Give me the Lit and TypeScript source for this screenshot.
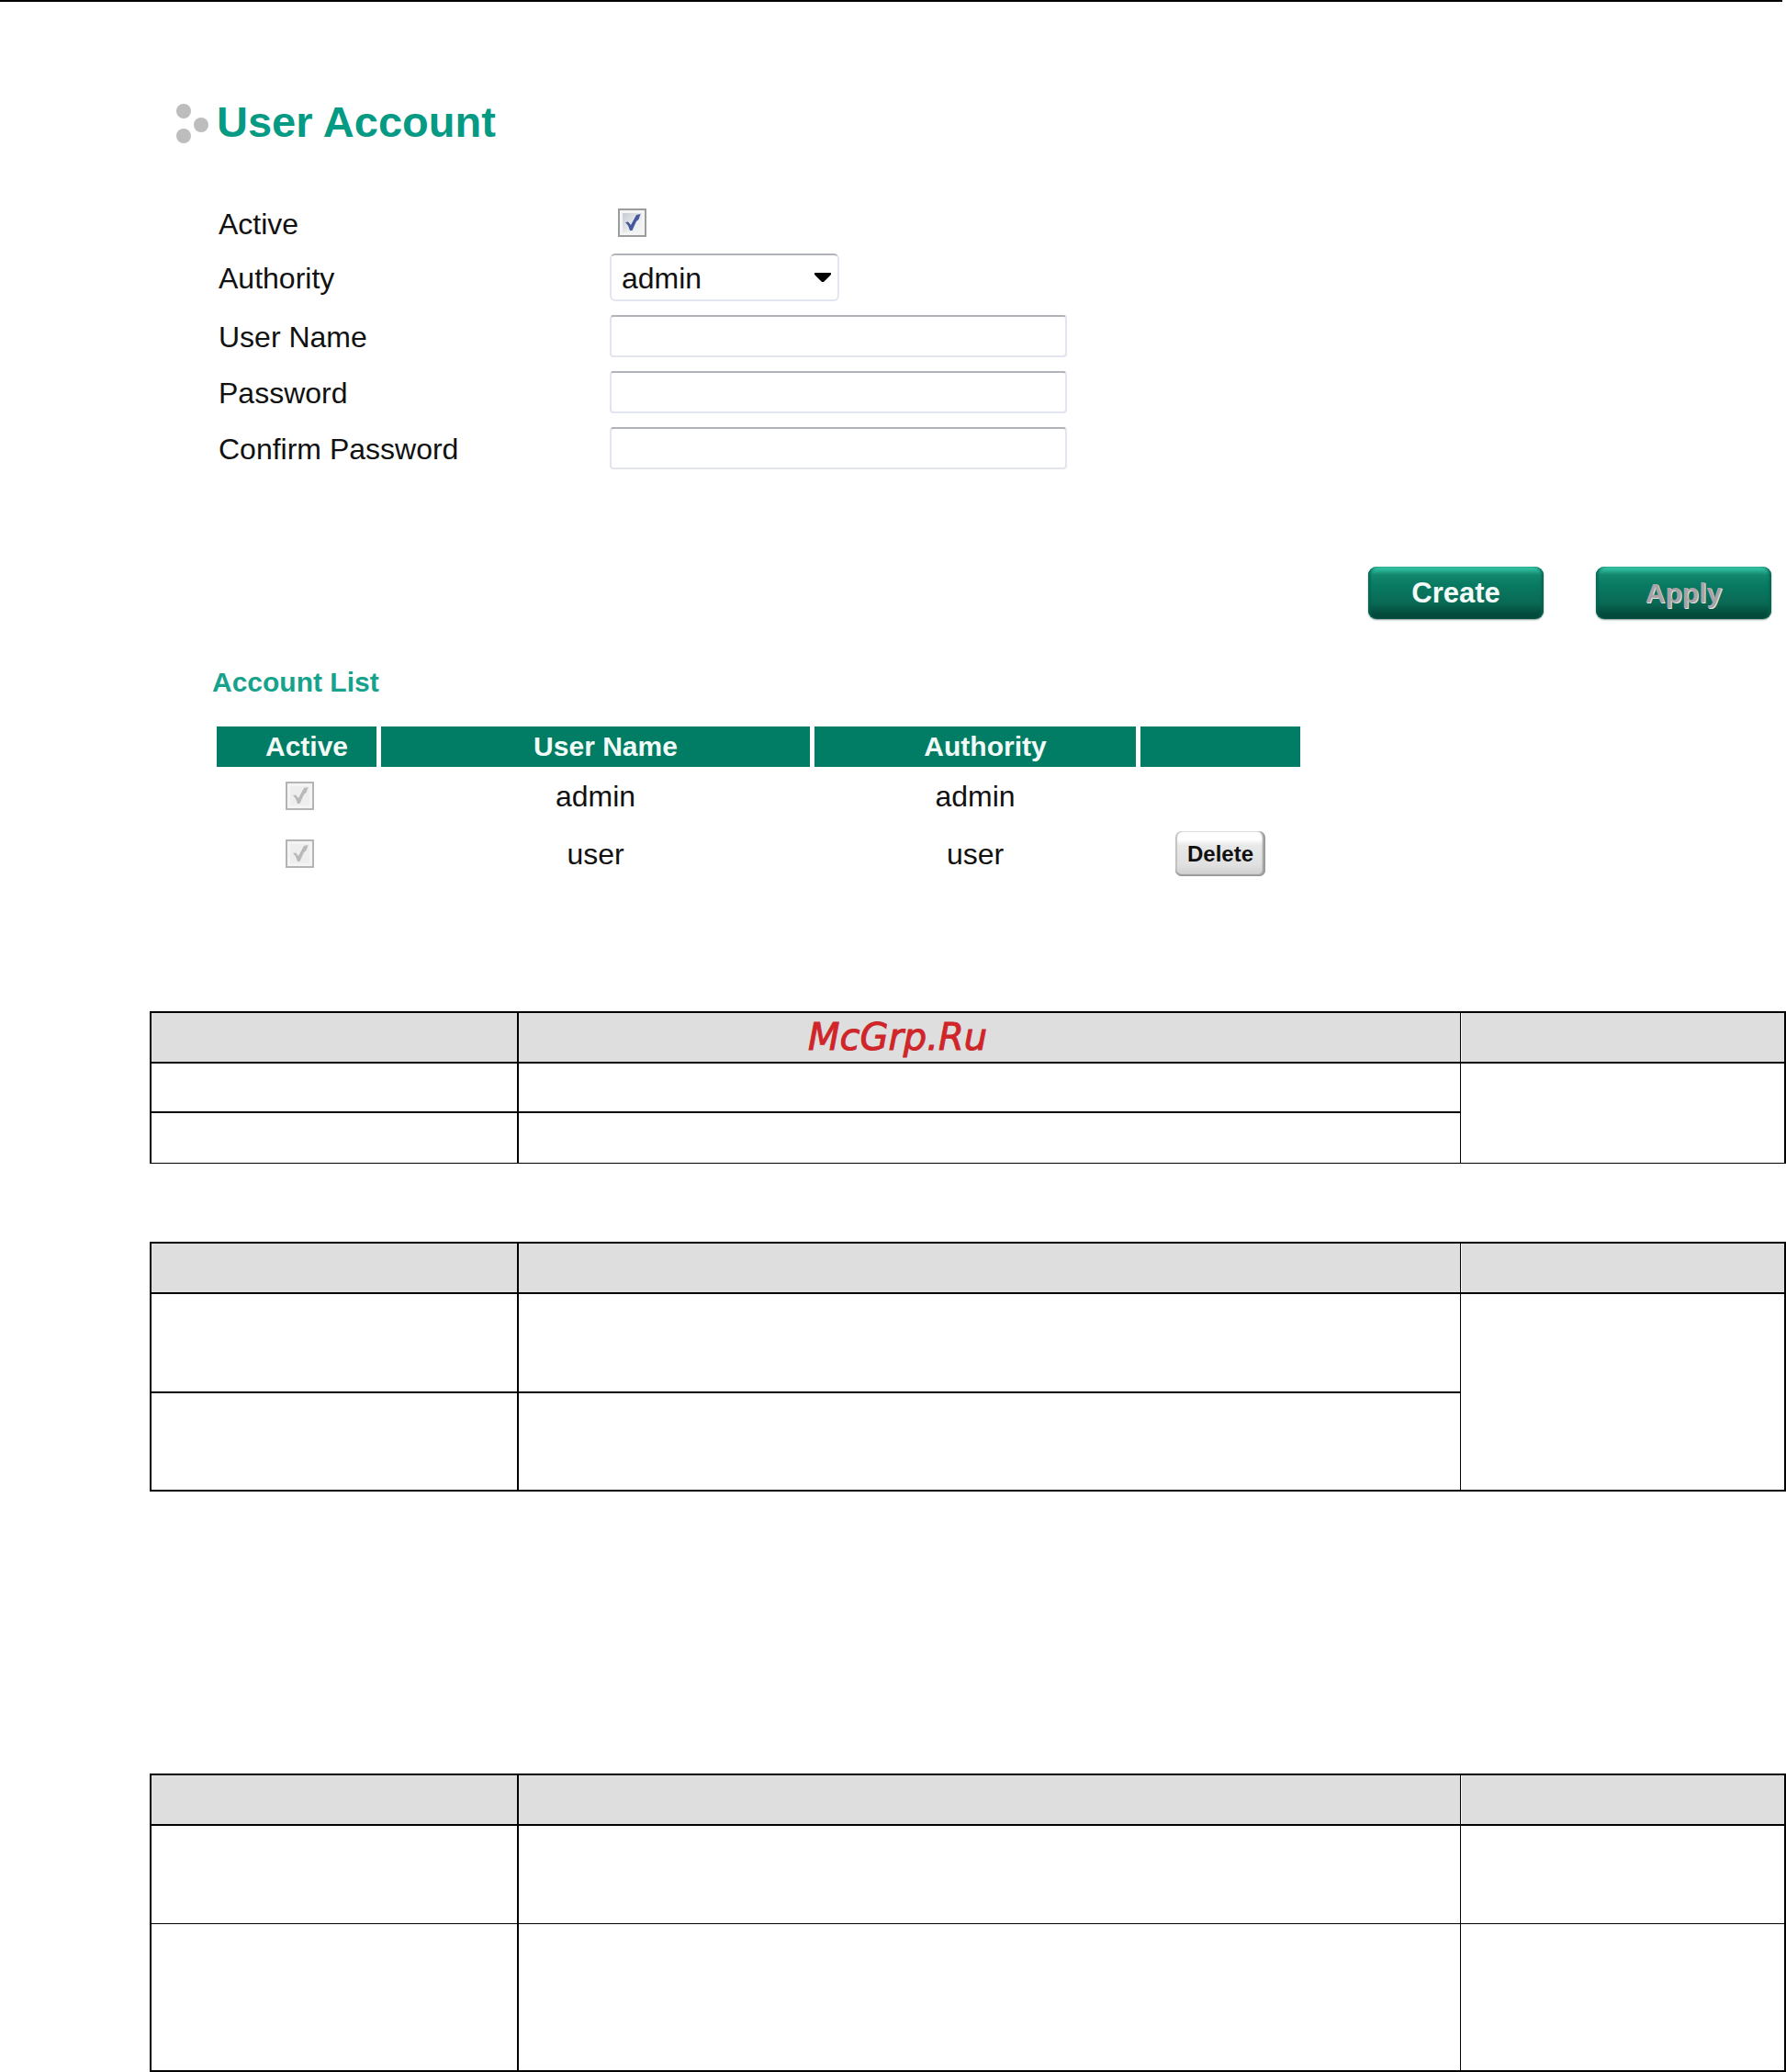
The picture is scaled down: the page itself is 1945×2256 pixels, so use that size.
import { LitElement, html, css, svg } from "lit";
import { customElement, state } from "lit/decorators.js";

interface Account {
  name: string;
  authority: string;
  removable: boolean;
}

@customElement("app-root")
class AppRoot extends LitElement {
  @state() private accounts: Account[] = [
    { name: "admin", authority: "admin", removable: false },
    { name: "user", authority: "user", removable: true },
  ];

  static styles = css`
    :host {
      display: block;
      background: #ffffff;
      color: #111111;
      font-family: "Liberation Sans", Arial, sans-serif;
      font-size: 32px;
      line-height: 36px;
    }
    .rule {
      height: 2px;
      margin-right: 4px;
      background: #000000;
    }
    .title {
      display: flex;
      align-items: center;
      gap: 8px;
      margin: 0;
      padding: 105px 0 65px 192px;
      color: #059a83;
      font-size: 47px;
      line-height: 52px;
    }
    .dots {
      width: 36px;
      height: 46px;
      fill: #bdbdbd;
    }
    .form {
      display: grid;
      grid-template-columns: 426px minmax(0, 498px);
      grid-template-rows: 37px 52px 46px 46px 46px;
      row-gap: 15px;
      align-items: center;
      padding-left: 238px;
    }
    .label {
      padding-top: 2px;
    }
    .active {
      display: flex;
      padding-left: 9px;
    }
    .tick {
      display: inline-grid;
      vertical-align: middle;
    }
    .box,
    .mark {
      grid-area: 1 / 1;
      width: 31px;
      height: 31px;
      margin: 0;
      box-sizing: border-box;
    }
    .box {
      appearance: none;
      border: 2px solid #9b9c9c;
      background: linear-gradient(135deg, #bcc3cb, #eceef0 60%, #f6f6f6);
      box-shadow: inset 0 0 0 3px #f4f4f4;
    }
    .box:disabled {
      border-color: #b4b4b4;
      background: #eeeeee;
    }
    .mark {
      pointer-events: none;
      fill: #47599c;
    }
    .box:disabled + .mark {
      fill: #b9b9b9;
    }
    .box:not(:checked) + .mark {
      visibility: hidden;
    }
    .field {
      box-sizing: border-box;
      width: 100%;
      height: 100%;
      margin: 0;
      padding: 0 11px;
      border: 2px solid #e2e5ee;
      border-top-color: #b1b3ba;
      border-radius: 4px;
      background: #ffffff;
      color: #111111;
      font: inherit;
    }
    .picker {
      display: grid;
      width: 250px;
      height: 100%;
      align-items: center;
    }
    .picker > * {
      grid-area: 1 / 1;
    }
    .picker .field {
      appearance: none;
      padding-top: 2px;
      border-radius: 6px;
    }
    .arrow {
      width: 18px;
      height: 10px;
      margin-right: 9px;
      justify-self: end;
      pointer-events: none;
    }
    .actions {
      display: flex;
      justify-content: flex-end;
      gap: 57px;
      padding: 106px 16px 51px 0;
    }
    .action {
      width: 191px;
      height: 57px;
      padding: 0;
      border: 0;
      border-radius: 9px;
      background: linear-gradient(#3cd0b0, #12876d 16%, #087a62 35%, #0a6a55 68%, #02493a 92%);
      box-shadow: inset 3px 0 3px -1px #066450, inset -3px 0 3px -1px #066450, 0 1px 2px #8a9a96;
      color: #f2fbf8;
      font: inherit;
      font-size: 31px;
      font-weight: bold;
    }
    .action.dim {
      color: #a9a3a6;
      font-size: 30px;
      text-shadow: 1px 1px 0 #e4e4e6;
    }
    .subtitle {
      margin: 0;
      padding: 0 0 30px 231px;
      color: #16a28c;
      font-size: 30px;
      line-height: 36px;
    }
    .accounts {
      width: 1180px;
      max-width: calc(100% - 236px);
      margin-left: 236px;
      table-layout: fixed;
      border-collapse: separate;
      border-spacing: 0;
      text-align: center;
    }
    .accounts th,
    .accounts td {
      box-sizing: border-box;
      height: 63px;
      padding: 0;
      border-left: 5px solid #ffffff;
    }
    .accounts th {
      height: 44px;
      padding-left: 22px;
      background: #007d64;
      color: #f2fbf8;
      font-size: 30px;
    }
    .accounts th:first-child,
    .accounts td:first-child {
      border-left: 0;
    }
    .accounts td:first-child {
      padding-left: 6px;
      line-height: 1px;
    }
    .col-active {
      width: 174px;
    }
    .col-authority {
      width: 355px;
    }
    .col-delete {
      width: 179px;
    }
    .delete {
      width: 98px;
      height: 49px;
      padding: 0;
      border: 0;
      border-radius: 7px;
      background: linear-gradient(#ffffff 18%, #e8e8e8 32%, #e0e0e0 75%, #cccccc);
      box-shadow: inset -4px 0 2px -1px #999999, inset 0 -2px 1px #9a9a9a, inset 2px 0 1px #c4c4c4, inset 0 1px 1px #e6e6e6;
      color: #111111;
      font: inherit;
      font-size: 24px;
      font-weight: bold;
      vertical-align: middle;
    }
    .marked {
      position: relative;
      padding: 140px 0 0 163px;
    }
    .watermark {
      position: absolute;
      top: 142px;
      left: 0;
      right: 0;
      padding-left: 10px;
      color: #d42428;
      font-family: "DejaVu Sans", Verdana, sans-serif;
      font-size: 40px;
      font-style: oblique;
      line-height: 52px;
      text-align: center;
      -webkit-text-stroke: 1px #c8282c;
      pointer-events: none;
    }
    .section {
      padding: 85px 0 0 163px;
    }
    .section.far {
      padding-top: 307px;
    }
    .grid {
      width: 100%;
      table-layout: fixed;
      border-collapse: separate;
      border-spacing: 0;
    }
    .grid .first {
      width: 400px;
    }
    .grid .last {
      width: 355px;
    }
    .grid th,
    .grid td {
      box-sizing: border-box;
      padding: 0;
      border: 0 solid #000000;
      border-top-width: 2px;
      border-left-width: 2px;
    }
    .grid th {
      height: 55px;
      background: #dedede;
    }
    .grid .edge {
      border-left-width: 1px;
      border-right-width: 2px;
    }
    .grid th.edge {
      box-shadow: inset 1px 0 0 #f6f6f6;
    }
    .short td {
      height: 54px;
    }
    .short .end td,
    .short .edge.end {
      height: 57px;
      border-bottom-width: 1px;
    }
    .medium td {
      height: 108px;
    }
    .medium .end td,
    .medium .edge.end {
      height: 109px;
      border-bottom-width: 2px;
    }
    .tall td {
      height: 108px;
    }
    .tall .end td {
      height: 162px;
      border-top-width: 1px;
      border-bottom-width: 2px;
    }
  `;

  private tick(id: string, label: string, disabled: boolean) {
    return html`
      <span class="tick">
        <input
          class="box"
          type="checkbox"
          id=${id}
          aria-label=${label}
          ?disabled=${disabled}
          checked
        />
        <svg class="mark" viewBox="0 0 31 31" aria-hidden="true">
          <path d="M8 15L11 14.5L14 18L20 7L24.500 6L22.500 12L20 14L15.500 24L13 24L11 18.500Z" />
        </svg>
      </span>
    `;
  }

  private gridTable(kind: "short" | "medium" | "tall", merged: boolean) {
    return html`
      <table class="grid ${kind}">
        <colgroup>
          <col class="first" />
          <col />
          <col class="last" />
        </colgroup>
        <thead>
          <tr>
            <th></th>
            <th></th>
            <th class="edge"></th>
          </tr>
        </thead>
        <tbody>
          <tr>
            <td></td>
            <td></td>
            ${merged
              ? html`<td class="edge end" rowspan="2"></td>`
              : html`<td class="edge"></td>`}
          </tr>
          <tr class="end">
            <td></td>
            <td></td>
            ${merged ? "" : html`<td class="edge"></td>`}
          </tr>
        </tbody>
      </table>
    `;
  }

  private textRow(id: string, label: string, type: string) {
    return html`
      <label class="label" for=${id}>${label}</label>
      <input class="field" id=${id} type=${type} />
    `;
  }

  render() {
    return html`
      <div class="rule"></div>
      <h1 class="title">
        <svg class="dots" viewBox="0 0 36 46" aria-hidden="true">
          ${[[8, 11], [27, 26], [8, 38]].map(
            ([x, y]) => svg`<circle cx=${x} cy=${y} r="8" />`
          )}
        </svg>
        User Account
      </h1>

      <form class="form" @submit=${(e: Event) => e.preventDefault()}>
        <label class="label" for="active">Active</label>
        <div class="active">${this.tick("active", "Active", false)}</div>
        <label class="label" for="authority">Authority</label>
        <div class="picker">
          <select class="field" id="authority">
            <option>admin</option>
            <option>user</option>
          </select>
          <svg class="arrow" viewBox="0 0 18 10" aria-hidden="true">
            <path d="M0 0H18V2L10 10H8L0 2Z" />
          </svg>
        </div>
        ${this.textRow("name", "User Name", "text")}
        ${this.textRow("password", "Password", "password")}
        ${this.textRow("confirm", "Confirm Password", "password")}
      </form>

      <div class="actions">
        <button class="action" type="button">Create</button>
        <button class="action dim" type="button">Apply</button>
      </div>

      <h2 class="subtitle">Account List</h2>
      <table class="accounts">
        <colgroup>
          <col class="col-active" />
          <col />
          <col class="col-authority" />
          <col class="col-delete" />
        </colgroup>
        <thead>
          <tr>
            <th>Active</th>
            <th>User Name</th>
            <th>Authority</th>
            <th></th>
          </tr>
        </thead>
        <tbody>
          ${this.accounts.map(
            (a) => html`
              <tr>
                <td>${this.tick(`active-${a.name}`, a.name, true)}</td>
                <td>${a.name}</td>
                <td>${a.authority}</td>
                <td>
                  ${a.removable
                    ? html`<button class="delete" type="button">Delete</button>`
                    : ""}
                </td>
              </tr>
            `
          )}
        </tbody>
      </table>

      <div class="marked">
        ${this.gridTable("short", true)}
        <div class="watermark">McGrp.Ru</div>
      </div>
      <div class="section">${this.gridTable("medium", true)}</div>
      <div class="section far">${this.gridTable("tall", false)}</div>
    `;
  }
}
